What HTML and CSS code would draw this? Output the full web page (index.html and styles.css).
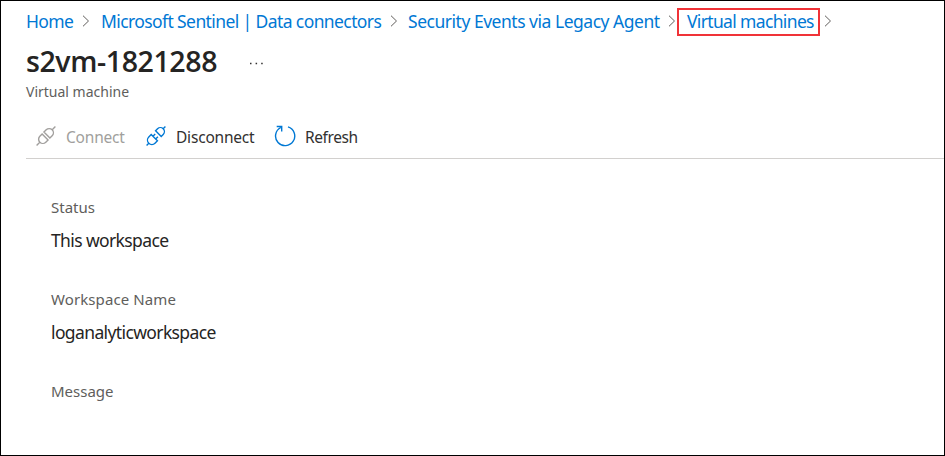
FILE: index.html
```html
<!DOCTYPE html>
<html lang="en">
<head>
<meta charset="utf-8">
<title>s2vm-1821288</title>
<link rel="stylesheet" href="styles.css">
</head>
<body>
<main class="page">
  <nav class="crumbs">
    <a class="crumb home">Home</a>
    <svg class="chevron" viewBox="0 0 8 12"><path d="M1 .7 6.5 6 1 11.3"/></svg>
    <a class="crumb connectors">Microsoft Sentinel | Data connectors</a>
    <svg class="chevron" viewBox="0 0 8 12"><path d="M1 .7 6.5 6 1 11.3"/></svg>
    <a class="crumb agent">Security Events via Legacy Agent</a>
    <svg class="chevron" viewBox="0 0 8 12"><path d="M1 .7 6.5 6 1 11.3"/></svg>
    <a class="crumb machines">Virtual machines</a>
    <svg class="chevron" viewBox="0 0 8 12"><path d="M1 .7 6.5 6 1 11.3"/></svg>
  </nav>
  <header class="heading">
    <h1 class="title">s2vm-1821288</h1>
    <svg class="more" viewBox="0 0 15 3"><path d="M1 .7h1.5v1.5H1zM6.6.7h1.5v1.5H6.6zM12.2.7h1.5v1.5h-1.5z"/></svg>
  </header>
  <p class="subtitle">Virtual machine</p>
  <div class="toolbar">
    <button class="command connect" disabled>
      <svg class="icon" viewBox="0 0 20 20"><g transform="translate(10 10) rotate(45)"><path d="M0-13.3V-8.5M-4.2-1.3h8.4V-4.5a4.2 4.2 0 0 0-8.4 0zM-4.2 1.3h8.4V4.5a4.2 4.2 0 0 1-8.4 0zM0 8.5v4.8"/></g></svg>
      <span>Connect</span>
    </button>
    <button class="command disconnect">
      <svg class="icon" viewBox="0 0 20 20"><g transform="translate(10 10) rotate(45)"><path d="M0-13.3V-10.2M-4-3.4h8V-6.2a4 4 0 0 0-8 0zM-4.4 2.4h8.8V5.8a4.4 4.4 0 0 1-8.8 0zM0 10.2v3.1M-1.9 2.4V-.8M1.9 2.4V-.8"/></g></svg>
      <span>Disconnect</span>
    </button>
    <button class="command refresh">
      <svg class="icon" viewBox="0 0 22 22"><path d="M14 1.9A9.6 9.6 0 1 1 6.8 2.5M2.7 1.5h5v5"/></svg>
      <span>Refresh</span>
    </button>
  </div>
  <dl class="details">
    <dt class="status-label">Status</dt>
    <dd class="status-value">This workspace</dd>
    <dt class="name-label">Workspace Name</dt>
    <dd class="name-value">loganalyticworkspace</dd>
    <dt class="message-label">Message</dt>
  </dl>
</main>
</body>
</html>
```
FILE: styles.css
```css
* { box-sizing: border-box; }
body { margin: 0; background: #fff; color: #252423; font-family: "Noto Sans", "Open Sans", sans-serif; }
.page { height: 456px; padding: 6px 0 0 25px; border: 1px solid #000; overflow: hidden; white-space: nowrap; }
.crumbs { display: flex; align-items: center; height: 28px; }
.crumb { flex: none; color: #0078d4; font-size: 17.5px; line-height: 26px; }
.home { width: 47px; letter-spacing: -.65px; }
.connectors { width: 280px; margin-left: 2px; letter-spacing: -.6px; }
.agent { width: 251px; margin-left: 1px; letter-spacing: -.48px; }
.chevron { flex: none; width: 8px; height: 12px; margin: 0 9px; fill: none; stroke: #605e5c; stroke-width: 1; }
.machines { width: 143px; height: 28px; padding-left: 8px; margin: 2px -5px 0 -8px; border: 2px solid #f03338; letter-spacing: -.65px; line-height: 22px; }
.heading { display: flex; align-items: center; height: 40px; margin-top: 6px; }
.title { width: 223px; margin: 0; font: 600 28.5px/40px "Open Sans", "Noto Sans", sans-serif; letter-spacing: -.4px; }
.more { width: 15px; height: 3px; margin-top: 5px; fill: #323130; }
.subtitle { height: 20px; margin: 0; font-size: 14px; line-height: 22px; color: #605e5c; }
.toolbar { display: flex; align-items: center; height: 58px; padding: 15px 0 0 10px; border-bottom: 1px solid #d2d0ce; }
.command { display: flex; align-items: center; padding: 0; border: 0; background: none; color: #323130; font: 15.5px/24px "Noto Sans", "Open Sans", sans-serif; letter-spacing: -.2px; }
.icon { flex: none; width: 20px; height: 20px; margin: -3px 10px 0 0; fill: none; stroke: #0078d4; stroke-width: 1.4; }
.connect { width: 110px; color: #a19f9d; }
.connect .icon { stroke: #a19f9d; }
.disconnect { width: 128px; }
.refresh { letter-spacing: -.4px; }
.refresh .icon { width: 22px; height: 22px; margin-right: 9px; }
.details { margin: 36px 0 0 25px; }
.details dt { height: 24px; font-size: 15px; line-height: 24px; color: #605e5c; }
.details .name-label { letter-spacing: .1px; }
.details dd { height: 26px; margin: 8px 0 34px; font-size: 17.5px; line-height: 27px; letter-spacing: -.62px; }
```
